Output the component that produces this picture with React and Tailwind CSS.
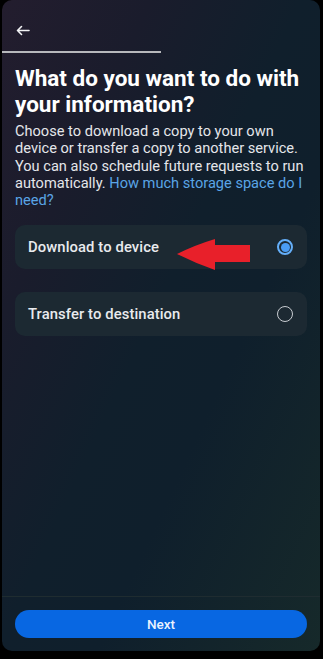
import React from "react";

const options = [
  { name: "Download to device", selected: true },
  { name: "Transfer to destination", selected: false },
];

const BackArrow = () => (
  <svg width="14" height="11" viewBox="0 0 14 11" fill="none">
    <path
      d="M13 5.5H1.5M5.5 1.5L1.5 5.5L5.5 9.5"
      stroke="#f2f3f5"
      strokeWidth="1.6"
      strokeLinecap="round"
      strokeLinejoin="round"
    />
  </svg>
);

const RedArrow = () => (
  <svg
    className="absolute left-[160px] top-[12px]"
    width="78"
    height="36"
    viewBox="0 0 78 36"
  >
    <path
      d="M2 17 Q20 8 40 2 L40 8 L75 8 L75 25 L40 25 L40 33 Q20 26 2 17 Z"
      fill="#e8202a"
    />
  </svg>
);

const Radio = ({ on }) =>
  on ? (
    <span className="flex h-4 w-4 items-center justify-center rounded-full border-2 border-[#64aef8]">
      <span className="h-[9px] w-[9px] rounded-full bg-[#4a9cf4]" />
    </span>
  ) : (
    <span className="h-4 w-4 rounded-full border-[1.5px] border-[#c8ccd1]" />
  );

export default function App() {
  return (
    <div className="h-[659px] w-[323px] bg-black font-['Roboto',sans-serif]">
      <div className="ml-[2px] flex h-[651px] w-[318px] flex-col overflow-hidden rounded-[10px] bg-[linear-gradient(115deg,#231d2e_0%,#1a1c2c_24%,#101f2c_48%,#0f1f2c_64%,#16292a_100%)]">
        <div className="flex h-[51px] items-center pl-[14px] pt-[10px]">
          <BackArrow />
        </div>
        <div className="h-[2px] w-[159px] bg-[#b7b8bc]" />

        <div className="px-[13px]">
          <h1 className="mt-[12px] text-[22.5px] font-bold leading-[26px] text-white">
            What do you want to do with your information?
          </h1>
          <p className="mt-[6px] text-[14.6px] leading-[17.3px] text-[#e4e6ea]">
            Choose to download a copy to your own device or transfer a copy to
            another service. You can also schedule future requests to run
            automatically.{" "}
            <span className="text-[#5aa5e6]">
              How much storage space do I need?
            </span>
          </p>

          <div className="mt-[16px] flex flex-col gap-[23px]">
            {options.map((o) => (
              <div
                key={o.name}
                className="relative flex h-[44px] items-center justify-between rounded-[10px] bg-[#1c2932] pl-[13px] pr-[14px]"
              >
                <span className="text-[14.8px] font-medium tracking-[0.1px] text-[#e9ebee]">
                  {o.name}
                </span>
                {o.selected && <RedArrow />}
                <Radio on={o.selected} />
              </div>
            ))}
          </div>
        </div>

        <div className="flex-1" />
        <div className="border-t border-[#1f2c30] px-[13px] pb-[13px] pt-[13px]">
          <button className="flex h-[28px] w-full items-center justify-center rounded-full bg-[#0867e2] text-[13.5px] font-medium text-[#eaf2ff]">
            Next
          </button>
        </div>
      </div>
    </div>
  );
}
